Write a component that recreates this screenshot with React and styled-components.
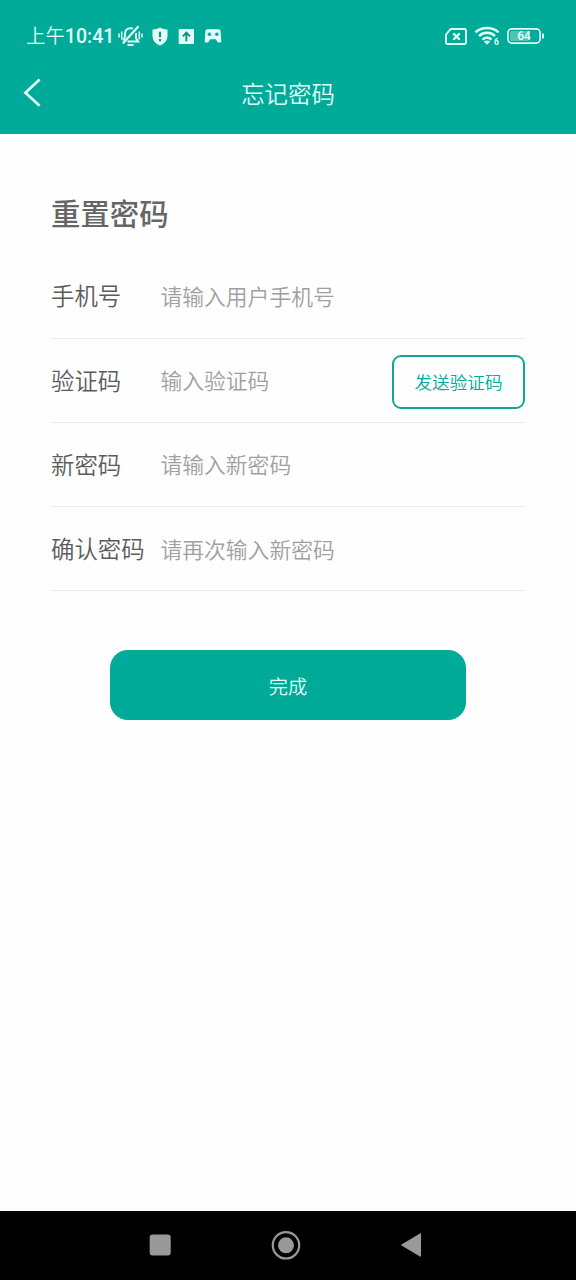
import React from 'react';
import styled, { createGlobalStyle } from 'styled-components';

const GREEN = '#00aa98';
const ICE = '#e2fffb';

const GlobalStyle = createGlobalStyle`
  * { box-sizing: border-box; }
  body { margin: 0; background: #fff; }
  button { font: inherit; padding: 0; border: 0; background: none; }
`;

const Screen = styled.div`
  width: 576px;
  height: 1280px;
  display: flex;
  flex-direction: column;
  background: #fefefe;
  font-family: 'Noto Sans CJK SC', sans-serif;
  font-weight: 350;
`;

const Header = styled.header`
  height: 134px;
  background: ${GREEN};
  color: ${ICE};
`;

const StatusBar = styled.div`
  height: 70px;
  padding: 2px 31px 0 26px;
  display: flex;
  align-items: center;
  justify-content: space-between;
`;

const StatusGroup = styled.div`
  display: flex;
  align-items: center;
  gap: ${(p) => p.$gap || 0}px;
  svg { display: block; overflow: visible; }
`;

const Clock = styled.span`
  width: 92px;
  font-size: 19.4px;
  line-height: 28px;
  white-space: nowrap;
`;

const Digits = styled.span`
  font-family: Roboto, sans-serif;
  font-weight: 500;
  font-size: 19.6px;
`;

const TitleBar = styled.div`
  height: 46px;
  display: grid;
  grid-template-columns: 64px 1fr 64px;
  align-items: center;
`;

const BackButton = styled.button`
  height: 46px;
  padding-left: 22px;
  display: flex;
  align-items: center;
`;

const PageTitle = styled.h1`
  margin: 0;
  text-align: center;
  font-size: 23.4px;
  line-height: 34px;
  font-weight: 350;
`;

const Form = styled.main`
  flex: 1;
  padding: 60px 51px 0;
  display: flex;
  flex-direction: column;
`;

const Heading = styled.h2`
  margin: 0 0 17px;
  height: 43px;
  font-size: 29.4px;
  line-height: 37px;
  font-weight: 500;
  color: #666;
`;

const Field = styled.div`
  height: ${(p) => p.$height || 84}px;
  padding-bottom: 2px;
  display: flex;
  align-items: center;
  border-bottom: 1px solid #ececec;
`;

const Label = styled.label`
  width: 109.4px;
  font-size: 23.4px;
  line-height: 34px;
  color: #5c5c5c;
`;

const Hint = styled.span`
  flex: 1;
  padding-top: ${(p) => p.$drop || 0}px;
  font-size: 21.8px;
  line-height: 32px;
  color: #a0a0a0;
`;

const CodeButton = styled.button`
  width: 133px;
  height: 54px;
  margin-top: 5px;
  padding-bottom: 1px;
  border: 2px solid #14a594;
  border-radius: 9px;
  color: ${GREEN};
  font-size: 17.6px;
`;

const SubmitButton = styled.button`
  width: 356px;
  height: 70px;
  margin-top: 59px;
  padding-top: 1px;
  align-self: center;
  border-radius: 18px;
  background: ${GREEN};
  color: ${ICE};
  font-size: 19.3px;
`;

const NavBar = styled.nav`
  height: 69px;
  background: #000;
  display: flex;
  align-items: center;
  padding: 0 0 1px 149px;
  svg { display: block; }
`;

const NavKey = styled.button`
  width: ${(p) => p.$width}px;
  display: flex;
`;

const MutedBell = () => (
  <svg width="24" height="22" viewBox="0 0 24 22" fill="none" stroke={ICE} strokeWidth="2">
    <path d="M7 12V8.800C7 5.400 9.300 3.200 12.500 3.200c.9 0 1.700.2 2.400.5M18 8v5.200l2.200 3.300H9.500M5.200 15.500 7 12" />
    <path d="M20.500 1.300 4.800 18.500" strokeWidth="2.200" />
    <path d="M9.500 20h6" strokeWidth="2" />
    <path d="M3.700 6.500v8M1 8.500v4M21.300 6.500v8M24 8.500v4" strokeWidth="1.500" />
  </svg>
);

const Shield = () => (
  <svg width="16" height="19" viewBox="0 0 16 19">
    <path d="M8 .5c2 1.300 4.600 1.900 7 2.100.3 0 .5.300.5.600v5.500c0 4.600-3 8-7.500 9.800C3.500 16.700.5 13.300.5 8.700V3.200c0-.3.200-.6.500-.6C3.400 2.400 6 1.800 8 .5Z" fill={ICE} />
    <path d="M8 4.800v5.500M8 12v2.200" stroke="#168f80" strokeWidth="2.200" />
  </svg>
);

const Upload = () => (
  <svg width="16" height="15" viewBox="0 0 16 15">
    <rect x=".7" width="15.300" height="15" rx="1" fill={ICE} />
    <path d="M8.400 12.300V4M4.800 7.300 8.400 3.700l3.600 3.600" fill="none" stroke="#128f80" strokeWidth="1.900" />
  </svg>
);

const Gamepad = () => (
  <svg width="17" height="14" viewBox="-.5 0 17 14">
    <path d="M3 .3h11c1.200 0 2 .7 2.100 1.900l.7 9.500c.1 1.200-.5 1.900-1.500 1.900h-1.200c-.5 0-.8-.2-1.100-.6L11.300 10.300H5.700L4 13c-.3.400-.6.600-1.100.6H1.700c-1 0-1.600-.7-1.500-1.900l.7-9.500C1 1 1.800.3 3 .3Z" fill={ICE} />
    <path d="M4.900 3.500v3.600M3.100 5.300h3.600" stroke={GREEN} strokeWidth="1.800" />
    <circle cx="12.300" cy="5.300" r="1.700" fill={GREEN} />
  </svg>
);

const NoSim = () => (
  <svg width="22" height="17" viewBox="0 0 22 17" fill="none" stroke={ICE}>
    <path d="M6.500 1h13c1 0 1.500.5 1.500 1.500v12c0 1-.5 1.500-1.500 1.500h-17C1.500 16 1 15.500 1 14.500V7.200c0-.6.200-1 .6-1.400l3.500-4.200c.4-.4.800-.6 1.400-.6Z" strokeWidth="1.900" />
    <path d="m8.300 5.400 6.400 6.400M14.700 5.400l-6.400 6.400" strokeWidth="2.200" />
  </svg>
);

const Wifi = () => (
  <svg width="25" height="20" viewBox="0 0 25 20" fill="none" stroke={ICE}>
    <path d="M.5 6.300c6.200-5.700 16.800-5.700 23 0" strokeWidth="2.500" />
    <path d="M4 10c4.600-4.200 11.400-4.200 16 0" strokeWidth="2.500" />
    <path d="M7.500 13.600c2.600-2.500 6.400-2.500 9 0" strokeWidth="2.500" />
    <path d="m8.800 15.600c1.800-1.600 4.600-1.600 6.400 0L12 18.800Z" fill={ICE} stroke="none" />
    <text x="19" y="19.300" fill={ICE} stroke="none" fontFamily="Roboto, sans-serif" fontSize="8.500" fontWeight="700">6</text>
  </svg>
);

const Battery = () => (
  <svg width="38" height="16" viewBox="0 0 38 16">
    <rect x="3" y="3" width="19" height="10" rx="1.500" fill="#50c5b6" />
    <rect x=".9" y=".9" width="32.200" height="14.200" rx="4" fill="none" stroke={ICE} strokeWidth="1.600" />
    <path d="M35 5.500h1.200c.5 0 .8.300.8.800v3.400c0 .5-.3.800-.8.800H35Z" fill={ICE} />
    <text x="17" y="12.200" textAnchor="middle" fill={ICE} fontFamily="Roboto, sans-serif" fontSize="12" fontWeight="500">64</text>
  </svg>
);

const BackChevron = () => (
  <svg width="20" height="30" viewBox="0 0 20 30" fill="none" stroke={ICE} strokeWidth="2.700">
    <path d="M17.600 1.600 3.400 14.800l14.200 13" />
  </svg>
);

export default function App() {
  return (
    <Screen>
      <GlobalStyle />
      <Header>
        <StatusBar>
          <StatusGroup>
            <Clock>上午<Digits>10:41</Digits></Clock>
            <StatusGroup $gap={10}>
              <MutedBell />
              <Shield />
              <Upload />
              <Gamepad />
            </StatusGroup>
          </StatusGroup>
          <StatusGroup $gap={7.5}>
            <NoSim />
            <Wifi />
            <Battery />
          </StatusGroup>
        </StatusBar>
        <TitleBar>
          <BackButton aria-label="返回"><BackChevron /></BackButton>
          <PageTitle>忘记密码</PageTitle>
        </TitleBar>
      </Header>
      <Form>
        <Heading>重置密码</Heading>
        <Field $height={85}>
          <Label>手机号</Label>
          <Hint $drop={2}>请输入用户手机号</Hint>
        </Field>
        <Field>
          <Label>验证码</Label>
          <Hint>输入验证码</Hint>
          <CodeButton>发送验证码</CodeButton>
        </Field>
        <Field>
          <Label>新密码</Label>
          <Hint>请输入新密码</Hint>
        </Field>
        <Field>
          <Label>确认密码</Label>
          <Hint $drop={2}>请再次输入新密码</Hint>
        </Field>
        <SubmitButton>完成</SubmitButton>
      </Form>
      <NavBar>
        <NavKey $width={122} aria-label="最近任务">
          <svg width="22" height="22" viewBox="0 0 22 22"><rect x=".7" y=".5" width="21" height="21" rx="3" fill="#999" /></svg>
        </NavKey>
        <NavKey $width={129} aria-label="主屏幕">
          <svg width="30" height="30" viewBox="0 0 30 30">
            <circle cx="15" cy="15.300" r="13.200" fill="none" stroke="#999" strokeWidth="2.200" />
            <circle cx="15" cy="15.300" r="8" fill="#999" />
          </svg>
        </NavKey>
        <NavKey $width={22} aria-label="返回">
          <svg width="22" height="26" viewBox="0 0 22 26"><path d="M1.500 12.400 20 1.500c.6-.4 1 0 1 .5v22c0 .6-.4.900-1 .5L1.500 13.600c-.5-.3-.5-.9 0-1.200Z" fill="#999" /></svg>
        </NavKey>
      </NavBar>
    </Screen>
  );
}
